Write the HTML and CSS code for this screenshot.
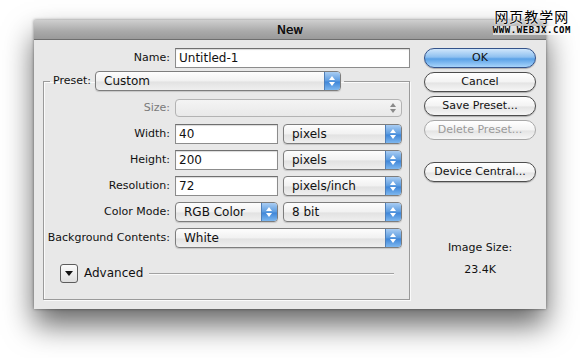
FILE: index.html
```html
<!DOCTYPE html>
<html lang="en">
<head>
    <meta charset="UTF-8">
    <meta name="viewport" content="width=device-width, initial-scale=1.0">
    <title>New</title>
    <link rel="stylesheet" href="styles.css">
</head>
<body>
    <div class="stage">
        <div class="dialog">
            <div class="titlebar">New</div>
            <div class="content">
                <div class="main">
                    <div class="name-row">
                        <span class="label">Name:</span>
                        <span class="field name-field">Untitled-1</span>
                    </div>

                    <fieldset class="preset">
                        <legend>
                            <span class="label">Preset:</span>
                            <span class="select preset-select"><span class="val">Custom</span><span class="arrows"></span></span>
                        </legend>

                        <div class="rows">
                            <span class="label disabled">Size:</span>
                            <span class="select span-2 off"><span class="val"></span><span class="arrows"></span></span>

                            <span class="label">Width:</span>
                            <span class="field">40</span>
                            <span class="select"><span class="val">pixels</span><span class="arrows"></span></span>

                            <span class="label">Height:</span>
                            <span class="field">200</span>
                            <span class="select"><span class="val">pixels</span><span class="arrows"></span></span>

                            <span class="label">Resolution:</span>
                            <span class="field">72</span>
                            <span class="select"><span class="val">pixels/inch</span><span class="arrows"></span></span>

                            <span class="label">Color Mode:</span>
                            <span class="select"><span class="val">RGB Color</span><span class="arrows"></span></span>
                            <span class="select"><span class="val">8 bit</span><span class="arrows"></span></span>

                            <span class="label">Background Contents:</span>
                            <span class="select span-2"><span class="val">White</span><span class="arrows"></span></span>
                        </div>

                        <div class="advanced">
                            <span class="disclose"></span>
                            <span class="adv-text">Advanced</span>
                            <span class="rule"></span>
                        </div>
                    </fieldset>
                </div>

                <div class="side">
                    <span class="btn default">OK</span>
                    <span class="btn">Cancel</span>
                    <span class="btn">Save Preset...</span>
                    <span class="btn dim">Delete Preset...</span>
                    <span class="btn central">Device Central...</span>
                    <div class="info">
                        <span>Image Size:</span>
                        <span>23.4K</span>
                    </div>
                </div>
            </div>
        </div>

        <!-- site stamp printed over the screenshot -->
        <div class="stamp">
            <span class="stamp-cn">网页教学网</span>
            <span class="stamp-url">WWW.WEBJX.COM</span>
        </div>
    </div>
</body>
</html>
```

FILE: styles.css
```css
body { margin: 0; background: #fff; font-family: "DejaVu Sans", "Liberation Sans", sans-serif; font-size: 11px; color: #111; }

.stage { position: relative; width: 580px; height: 358px; padding: 20px 0 0 34px; box-sizing: border-box; }

.dialog {
    width: 512px;
    background: #e8e8e8;
    box-shadow: 0 16px 28px rgba(0,0,0,0.6), 0 0 3px rgba(0,0,0,0.45);
}

.titlebar {
    height: 20px;
    line-height: 20px;
    text-align: center;
    font-size: 12px;
    color: #111;
    text-shadow: 0 0 0.5px #111;
    background: linear-gradient(#cfcfcf, #a9a9a9 60%, #9a9a9a);
    border-bottom: 1px solid #6e6e6e;
    box-sizing: border-box;
}

.content { display: flex; padding: 8px 10px 9px 9px; }
.main { width: 367px; }
.side { margin-left: 14px; width: 112px; display: flex; flex-direction: column; gap: 4px; }

.label { text-align: right; white-space: nowrap; line-height: 20px; }
.label.disabled { color: #7a7a7a; }

.name-row { display: grid; grid-template-columns: 127px 235px; column-gap: 5px; height: 20px; }

/* text boxes */
.field {
    height: 20px;
    box-sizing: border-box;
    background: #fff;
    border: 1px solid #8c8c8c;
    border-top-color: #6f6f6f;
    box-shadow: inset 0 1px 1px rgba(0,0,0,0.15);
    padding: 0 3px;
    line-height: 18px;
    font-size: 12px;
}

/* popup menus */
.select {
    display: flex;
    height: 20px;
    box-sizing: border-box;
    border: 1px solid #7d7d7d;
    border-radius: 4px;
    background: linear-gradient(#fdfdfd, #f1f1f1 50%, #e2e2e2 55%, #efefef);
    overflow: hidden;
    box-shadow: 0 1px 1px rgba(0,0,0,0.15);
}
.select .val { flex: 1; padding-left: 8px; line-height: 18px; font-size: 12px; }
.select .arrows {
    width: 15px;
    border-left: 1px solid #4f7fb8;
    background: linear-gradient(#a9cdf3, #5b9be0 50%, #3f86d8 55%, #7db7ef);
    position: relative;
}
.select .arrows::before, .select .arrows::after {
    content: "";
    position: absolute;
    left: 4px;
    border-left: 3px solid transparent;
    border-right: 3px solid transparent;
}
.select .arrows::before { top: 4px; border-bottom: 4px solid #fff; }
.select .arrows::after { top: 10px; border-top: 4px solid #fff; }

.select.off { border-color: #b3b3b3; background: linear-gradient(#f4f4f4, #e9e9e9); box-shadow: none; height: 18px; margin-top: 1px; }
.select.off .arrows { background: none; border-left: 0; }
.select.off .arrows::before { top: 3px; border-bottom-color: #8a8a8a; }
.select.off .arrows::after { top: 9px; border-top-color: #8a8a8a; }

/* preset group box */
.preset {
    margin: 3px 0 0 0;
    padding: 0 7px 17px 0;
    border: 1px solid #9a9a9a;
    box-shadow: 1px 1px 0 #fafafa, inset 1px 1px 0 #fafafa;
    min-width: 0;
}
.preset legend { display: flex; align-items: center; gap: 4px; margin-left: 6px; padding: 0 3px; }
.preset-select { width: 246px; }

.rows {
    margin-top: 7px;
    display: grid;
    grid-template-columns: 126px 103px 119px;
    grid-auto-rows: 20px;
    column-gap: 5px;
    row-gap: 6px;
}
.span-2 { grid-column: span 2; }

.advanced { display: flex; align-items: center; margin: 16px 8px 0 16px; height: 18px; }
.disclose {
    width: 16px;
    height: 17px;
    border: 1px solid #5c5c5c;
    border-radius: 3px;
    background: linear-gradient(#fbfbfb, #dedede);
    position: relative;
}
.disclose::after {
    content: "";
    position: absolute;
    left: 4px;
    top: 6px;
    border-left: 4px solid transparent;
    border-right: 4px solid transparent;
    border-top: 5px solid #111;
}
.adv-text { margin-left: 6px; font-size: 12px; }
.rule { flex: 1; margin-left: 6px; height: 1px; background: #a2a2a2; box-shadow: 0 1px 0 #fafafa; }

/* push buttons */
.btn {
    height: 20px;
    box-sizing: border-box;
    border: 1px solid #4d4d4d;
    border-radius: 10px;
    background: linear-gradient(#ffffff, #f3f3f3 50%, #e4e4e4 55%, #f6f6f6);
    text-align: center;
    line-height: 18px;
    font-size: 11px;
    box-shadow: 0 1px 1px rgba(0,0,0,0.25);
}
.btn.default {
    border-color: #34538a;
    background: linear-gradient(#cfe6fb, #8ec0f0 45%, #5aa1e6 55%, #a7d4fb);
}
.btn.dim { color: #9a9a9a; border-color: #a8a8a8; box-shadow: none; }
.btn.central { margin-top: 18px; }

.info { margin-top: 55px; display: flex; flex-direction: column; align-items: center; gap: 8px; line-height: 14px; }

/* stamp */
.stamp {
    position: absolute;
    top: 8px;
    right: 9px;
    display: flex;
    flex-direction: column;
    align-items: center;
}
.stamp-cn { display: block; height: 16px; line-height: 16px; font-family: "Noto Sans CJK SC", sans-serif; font-size: 14px; letter-spacing: 1px; color: #000; text-shadow: 0 0 2px #fff, 0 0 2px #fff; }
.stamp-url { display: block; margin-top: 2px; height: 9px; line-height: 9px; font-family: "DejaVu Sans Mono", monospace; font-weight: bold; font-size: 9px; letter-spacing: 0.6px; color: #000; background: rgba(255,255,255,0.6); }
```
